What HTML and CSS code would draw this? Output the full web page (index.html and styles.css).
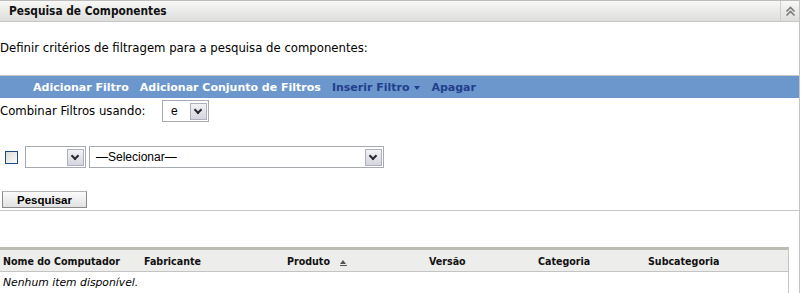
FILE: index.html
```html
<!DOCTYPE html>
<html lang="pt">

<head>
    <meta charset="UTF-8">
    <title>Pesquisa de Componentes</title>
    <link rel="stylesheet" href="styles.css">
</head>

<body>
    <div class="page">
        <section class="panel">
            <header class="panel-head">
                <h2 class="panel-title">Pesquisa de Componentes</h2>
                <div class="collapse">
                    <svg width="11" height="11" viewBox="0 0 11 11">
                        <path d="M1.5 5.5 L5.5 1.5 L9.5 5.5" fill="none" stroke="#7a7a7a" stroke-width="1.6"/>
                        <path d="M1.5 9.5 L5.5 5.5 L9.5 9.5" fill="none" stroke="#7a7a7a" stroke-width="1.6"/>
                    </svg>
                </div>
            </header>
            <div class="panel-body">
                <p class="intro">Definir critérios de filtragem para a pesquisa de componentes:</p>
                <div class="toolbar">
                    <span class="tool">Adicionar Filtro</span>
                    <span class="tool">Adicionar Conjunto de Filtros</span>
                    <span class="tool dim">Inserir Filtro <span class="caret"></span></span>
                    <span class="tool dim">Apagar</span>
                </div>
                <div class="combine">
                    <span class="label">Combinar Filtros usando:</span>
                    <div class="select sel-op">
                        <span class="value">e</span>
                        <span class="arrow"></span>
                    </div>
                </div>
                <div class="filter-row">
                    <span class="check"></span>
                    <div class="select sel-small">
                        <span class="value"></span>
                        <span class="arrow"></span>
                    </div>
                    <div class="select sel-wide">
                        <span class="value">&mdash;Selecionar&mdash;</span>
                        <span class="arrow"></span>
                    </div>
                </div>
                <button class="search-btn">Pesquisar</button>
            </div>
        </section>

        <div class="results">
            <div class="results-head">
                <div class="col">Nome do Computador</div>
                <div class="col">Fabricante</div>
                <div class="col">Produto <span class="sort"></span></div>
                <div class="col">Versão</div>
                <div class="col">Categoria</div>
                <div class="col">Subcategoria</div>
            </div>
            <div class="empty">Nenhum item disponível.</div>
        </div>
    </div>
</body>

</html>
```

FILE: styles.css
```css
* {
    margin: 0;
    padding: 0;
    box-sizing: border-box;
}

html,
body {
    height: 100%;
}

body {
    background: #fff;
    font-family: "DejaVu Sans", sans-serif;
    font-size: 11.7px;
    color: #000;
}

.page {
    width: 800px;
    height: 100%;
    border-right: 1px solid #c4c4c4;
}

.panel {
    border-top: 1px solid #bdbdbd;
    border-bottom: 1px solid #c8c8c8;
}

.panel-head {
    display: flex;
    align-items: center;
    height: 21px;
    background: linear-gradient(#f8f8f7, #dddddb);
    border-bottom: 1px solid #c6c6c6;
}

.panel-title {
    flex: 1;
    padding-left: 9px;
    font-family: "DejaVu Sans Condensed", "DejaVu Sans", sans-serif;
    font-size: 11.8px;
    font-weight: bold;
    color: #111;
}

.collapse {
    display: flex;
    align-items: center;
    justify-content: center;
    width: 19px;
    height: 20px;
    border-left: 1px solid #cfcfcf;
}

.panel-body {
    padding-top: 19px;
    padding-bottom: 2px;
}

.intro {
    line-height: 14px;
}

.toolbar {
    display: flex;
    gap: 11px;
    margin-top: 20px;
    height: 23px;
    padding-left: 33px;
    padding-top: 1px;
    align-items: center;
    background: #6c97cd;
    border-top: 1px solid #c8c8c8;
    font-weight: bold;
    font-size: 11px;
    color: #fff;
}

.tool.dim {
    color: #233f8c;
}

.caret {
    display: inline-block;
    margin-left: 1px;
    vertical-align: middle;
    border-left: 3.5px solid transparent;
    border-right: 3.5px solid transparent;
    border-top: 4px solid #233f8c;
}

.combine {
    display: flex;
    align-items: center;
    margin-top: 2px;
    height: 22px;
}

.combine .label {
    width: 162px;
}

.select {
    display: flex;
    align-items: center;
    height: 22px;
    background: #fff;
    border: 1px solid #a7abb0;
    padding: 1px;
}

.select .value {
    flex: 1;
    padding-left: 5px;
    font-family: "Liberation Sans", sans-serif;
    font-size: 12px;
}

.select .arrow {
    position: relative;
    width: 17px;
    height: 17px;
    border: 1px solid #aeb0c0;
    background: linear-gradient(#f2f2f6, #d4d5df);
}

.select .arrow::after {
    content: "";
    position: absolute;
    left: 4px;
    top: 3px;
    width: 4px;
    height: 4px;
    border-right: 2px solid #2a2a33;
    border-bottom: 2px solid #2a2a33;
    transform: rotate(45deg);
}

.sel-op {
    width: 47px;
}

.sel-op .value {
    padding-left: 7px;
}

.filter-row {
    display: flex;
    align-items: center;
    margin-top: 24px;
    padding-left: 5px;
    height: 22px;
}

.check {
    width: 13px;
    height: 13px;
    border: 1px solid #1e4c7f;
    background: linear-gradient(135deg, #dcdcd6, #fbfbf9);
    margin-right: 7px;
}

.sel-small {
    width: 61px;
    margin-right: 3px;
}

.sel-wide {
    width: 295px;
}

.search-btn {
    display: block;
    margin: 23px 0 0 2px;
    width: 85px;
    height: 17px;
    border: 1px solid #8a8a8a;
    border-top-color: #b5b5b5;
    background: linear-gradient(#fbfbfb, #e2e2e2);
    font-family: "Liberation Sans", sans-serif;
    font-size: 11.5px;
    font-weight: bold;
    color: #000;
}

.results {
    width: 789px;
    margin-top: 36px;
    border-top: 3px solid #bcbcb5;
    border-right: 1px solid #c4c4c4;
    height: calc(100% - 246px);
}

.results-head {
    display: grid;
    grid-template-columns: 141px 143px 142px 109px 110px 1fr;
    height: 22px;
    align-items: center;
    background: #ededeb;
    border-bottom: 1px solid #c4c4c4;
    font-family: "DejaVu Sans Condensed", "DejaVu Sans", sans-serif;
    font-size: 10.6px;
    font-weight: bold;
    color: #111;
}

.col {
    padding-left: 3px;
    white-space: nowrap;
}

.sort {
    display: inline-block;
    margin-left: 7px;
    width: 7px;
    height: 6px;
    vertical-align: -1px;
    border-bottom: 1px solid #555;
    position: relative;
}

.sort::before {
    content: "";
    position: absolute;
    left: 0;
    top: 0;
    border-left: 3.5px solid transparent;
    border-right: 3.5px solid transparent;
    border-bottom: 4px solid #555;
}

.empty {
    padding: 4px 0 0 3px;
    font-size: 10.8px;
    font-style: italic;
    line-height: 14px;
}
```
